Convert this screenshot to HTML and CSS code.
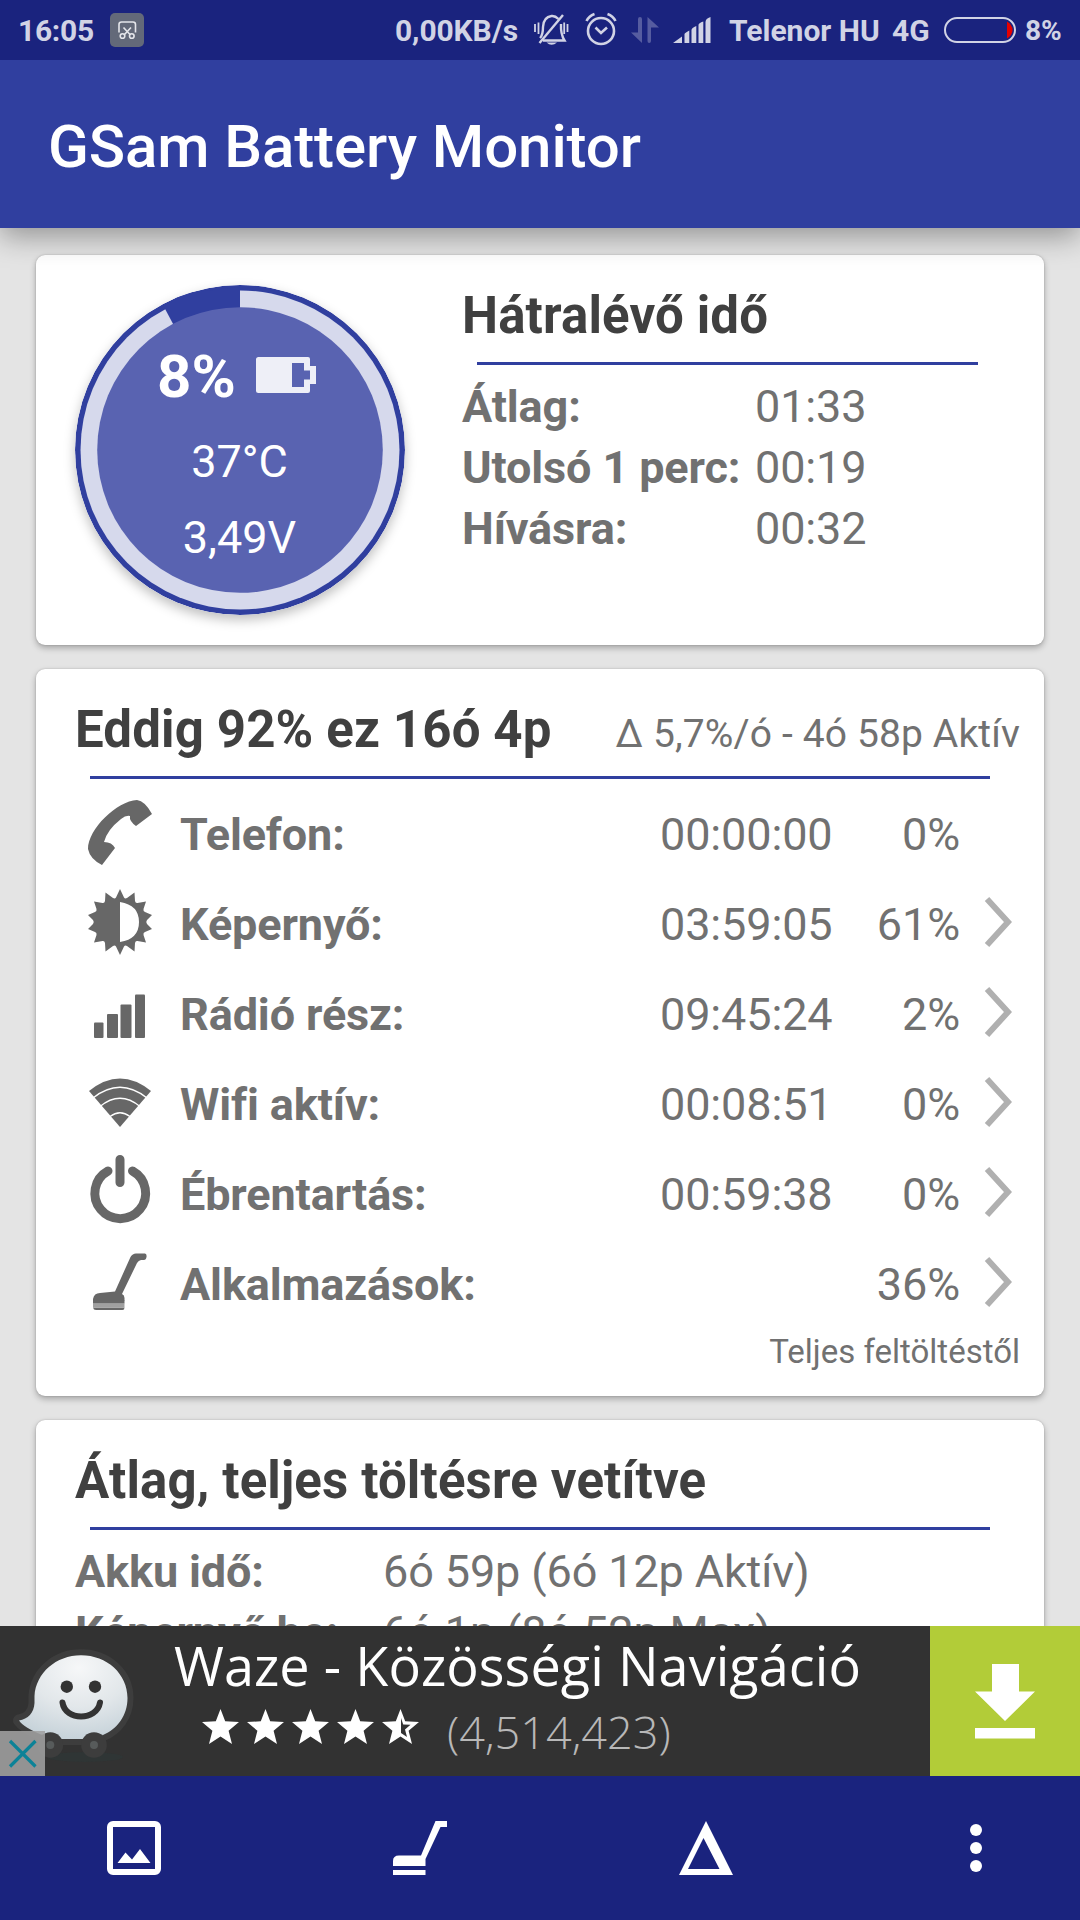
FILE: index.html
```html
<!DOCTYPE html>
<html lang="hu">
<head>
    <meta charset="UTF-8">
    <title>GSam Battery Monitor</title>
    <link rel="stylesheet" href="styles.css">
</head>
<body>
    <div class="status">
        <span class="clock">16:05</span>
        <svg class="shot" width="34" height="34" viewBox="0 0 34 34">
            <rect width="34" height="34" rx="5" fill="#636979"/>
            <g fill="none" stroke="#e4e5ea" stroke-width="1.6">
                <path d="M9 19.500V11.500Q9 9 11.500 9H23Q25.500 9 25.500 11.500V19.500M13.500 14.500L20 21.500M21 14.500L14.500 21.500"/>
                <circle cx="12.500" cy="23" r="2.300"/>
                <circle cx="21.800" cy="23" r="2.300"/>
            </g>
        </svg>
        <span class="speed">0,00KB/s</span>
        <svg class="bell" width="36" height="34" viewBox="0 0 36 34">
            <g fill="none" stroke="#d1d3e5" stroke-width="2.400">
                <path d="M7 25Q10 22 10 14Q10.500 4 18.500 3Q22 2.500 25.500 6M28 11Q27.500 21 31.500 27.500H10"/>
                <path d="M6.500 30L30 2"/>
                <path d="M2 11V19M5.500 9.500V21M34.500 11V19M31.200 9.500V21" stroke-width="1.800"/>
            </g>
            <path d="M13.500 29.500H24Q18.500 34 13.500 29.500Z" fill="#d1d3e5"/>
        </svg>
        <svg class="alarm" width="32" height="34" viewBox="0 0 32 34">
            <g fill="none" stroke="#d1d3e5" stroke-width="2.600">
                <circle cx="16" cy="19" r="13"/>
                <path d="M10.500 15.500L16 21L22 15.500"/>
                <path d="M1.500 9Q4 4 9.500 2M30.500 9Q28 4 22.500 2"/>
            </g>
        </svg>
        <svg class="arrows" width="28" height="26" viewBox="0 0 28 26">
            <path d="M7 2Q7 0 9 0Q11 0 11 2V26L0 15.500H7ZM16.500 0L28 10.500H20V24Q20 26 18.200 26Q16.500 26 16.500 24Z" fill="#565ca0"/>
        </svg>
        <svg class="bars" width="38" height="26" viewBox="0 0 38 26">
            <path d="M0 26L9 19.500V26ZM11.500 26V17Q11.500 16 16.300 13.500V26ZM18.500 26V13Q18.500 11 23.300 9V26ZM25.500 26V8Q25.500 6 30.300 4.500V26ZM32.500 26V5Q32.500 1.500 37.500 0V26Z" fill="#d1d3e5"/>
        </svg>
        <span class="carrier">Telenor HU</span>
        <span class="net">4G</span>
        <svg class="cell" width="72" height="26" viewBox="0 0 72 26">
            <rect x="1" y="1" width="70" height="24" rx="12" fill="none" stroke="#d1d3e5" stroke-width="2"/>
            <path d="M63 4.500Q68.500 8 68.500 13Q68.500 18 63 21.500Z" fill="#e60000"/>
        </svg>
        <span class="pct">8%</span>
    </div>
    <div class="header">
        <h1>GSam Battery Monitor</h1>
    </div>

    <div class="content">
        <div class="card summary">
            <div class="gauge">
                <!-- gyűrű: 8% töltöttség -->
                <svg class="ring" width="330" height="330" viewBox="0 0 330 330">
                    <circle cx="165" cy="165" r="165" fill="#303f9f"/>
                    <circle cx="165" cy="165" r="159.500" fill="#d6d9ec"/>
                    <path d="M165 165L88 20L110 8L165 2Z" fill="#303f9f"/>
                    <circle cx="165" cy="165" r="142.800" fill="#5963b1"/>
                </svg>
                <div class="level">
                    <span>8%</span>
                    <svg width="60" height="36" viewBox="0 0 60 36">
                        <path fill-rule="evenodd" d="M2.500 0H52Q54 0 54 2V9H60V27H54V34Q54 36 52 36H2.500Q0 36 0 33.500V2.500Q0 0 2.500 0ZM36 6V30H48V22.500H54V13.500H48V6Z" fill="#eeeff7"/>
                    </svg>
                </div>
                <div class="temp">37°C</div>
                <div class="volt">3,49V</div>
            </div>
            <div class="remain">
                <h2>Hátralévő idő</h2>
                <div class="line"></div>
                <ul class="pairs">
                    <li><b>Átlag:</b><span>01:33</span></li>
                    <li><b>Utolsó 1 perc:</b><span>00:19</span></li>
                    <li><b>Hívásra:</b><span>00:32</span></li>
                </ul>
            </div>
        </div>

        <div class="card usage">
            <div class="title">
                <h2>Eddig 92% ez 16ó 4p</h2>
                <span>Δ 5,7%/ó - 4ó 58p Aktív</span>
            </div>
            <div class="line"></div>
            <ul class="rows">
                <li>
                    <svg class="icon" viewBox="0 0 66 66">
                        <path d="M50 1Q58 2 65 15L49 27Q42 22 43 17Q39 16 34 20Q20 31 17 43Q25 43 28 49L15 66Q3 60 1 50C1 30 30 2 50 1Z"/>
                    </svg>
                    <b>Telefon:</b><span class="time">00:00:00</span><span class="num">0%</span>
                </li>
                <li>
                    <svg class="icon" viewBox="0 0 66 66">
                        <path fill-rule="evenodd" d="M33 0L37 8.500Q38 10 40 9L47.500 3.500L48 12Q48.500 14.500 50.500 14L59 12.500L56.500 20Q56 22.500 58 23L65 26L60 31Q58.500 33 60 35L65 40L58 43Q56 43.500 56.500 46L59 53.500L50.500 52Q48.500 51.500 48 54L47.500 62.500L40 57Q38 56 37 57.500L33 66L29 57.500Q28 56 26 57L18.500 62.500L18 54Q17.500 51.500 15.500 52L7 53.500L9.500 46Q10 43.500 8 43L1 40L6 35Q7.500 33 6 31L1 26L8 23Q10 22.500 9.500 20L7 12.500L15.500 14Q17.500 14.500 18 12L18.500 3.500L26 9Q28 10 29 8.500ZM33 13V53Q52 50 52 33Q52 16 33 13Z"/>
                    </svg>
                    <b>Képernyő:</b><span class="time">03:59:05</span><span class="num">61%</span>
                    <svg class="go" viewBox="0 0 28 52"><path d="M3 3L24 26L3 49"/></svg>
                </li>
                <li>
                    <svg class="icon" viewBox="0 0 66 66">
                        <rect x="7" y="43.500" width="9.500" height="15.500" rx="1"/>
                        <rect x="20" y="35" width="11" height="24" rx="1"/>
                        <rect x="33.500" y="25.500" width="11" height="33.500" rx="1"/>
                        <rect x="48" y="15.500" width="10" height="43.500" rx="1"/>
                    </svg>
                    <b>Rádió rész:</b><span class="time">09:45:24</span><span class="num">2%</span>
                    <svg class="go" viewBox="0 0 28 52"><path d="M3 3L24 26L3 49"/></svg>
                </li>
                <li>
                    <svg class="icon" viewBox="0 0 66 66">
                        <path d="M33 58L2 22Q33 -3 64 22Z"/>
                        <path d="M6 29Q33 7.500 60 29M13 37.500Q33 21 53 37.500M23 47.500Q33 40 43 47.500" fill="none" stroke="#fff" stroke-width="1.300"/>
                    </svg>
                    <b>Wifi aktív:</b><span class="time">00:08:51</span><span class="num">0%</span>
                    <svg class="go" viewBox="0 0 28 52"><path d="M3 3L24 26L3 49"/></svg>
                </li>
                <li>
                    <svg class="icon" viewBox="0 0 66 66">
                        <path d="M33 0.500V23.500M21 12A25.400 25.400 0 1 0 45.500 12" fill="none" stroke="#676767" stroke-width="9" stroke-linecap="round"/>
                    </svg>
                    <b>Ébrentartás:</b><span class="time">00:59:38</span><span class="num">0%</span>
                    <svg class="go" viewBox="0 0 28 52"><path d="M3 3L24 26L3 49"/></svg>
                </li>
                <li>
                    <svg class="icon" viewBox="0 0 66 66">
                        <path d="M6 52V50Q7 44 13 44L28 42.500L43.500 8Q45.500 4.500 49 4.500H58Q60 5 59.500 8Q59 11 57 11H54Q51.500 11.500 50 14L35 45Q37.500 46 37.500 49V52ZM6 58.500H37.500Q37.500 61 35.500 61H9Q6.500 61 6 58.500Z"/>
                        <path d="M6 54.500H37.500V58.500H6Z" fill="#a0a0a0"/>
                        <path d="M6 53H37.500" stroke="#676767" stroke-width="3"/>
                    </svg>
                    <b>Alkalmazások:</b><span class="time"></span><span class="num">36%</span>
                    <svg class="go" viewBox="0 0 28 52"><path d="M3 3L24 26L3 49"/></svg>
                </li>
            </ul>
            <div class="since">Teljes feltöltéstől</div>
        </div>

        <div class="card average">
            <h2>Átlag, teljes töltésre vetítve</h2>
            <div class="line"></div>
            <ul class="pairs">
                <li><b>Akku idő:</b><span>6ó 59p (6ó 12p Aktív)</span></li>
                <li><b>Képernyő be:</b><span>6ó 1p (8ó 52p Max)</span></li>
            </ul>
        </div>
    </div>

    <div class="ad">
        <svg class="waze" width="150" height="150" viewBox="0 0 150 150">
            <defs>
                <radialGradient id="ghost" cx="0.550" cy="0.150" r="0.850">
                    <stop offset="0" stop-color="#f6f7f8"/>
                    <stop offset="0.550" stop-color="#e2e7ea"/>
                    <stop offset="1" stop-color="#c7d3da"/>
                </radialGradient>
            </defs>
            <ellipse cx="85" cy="131" rx="38" ry="5" fill="#2f3535"/>
            <path d="M81 29.300C107 29.300 127.500 48 127.500 72C127.500 90 117 103 103 109L94 113H60L41 108.500C30 104 22 99 19 94.500C28 93 34 87 34.500 77V70C36 47 56 29.300 81 29.300Z" fill="url(#ghost)" stroke="#3d3d3d" stroke-width="12" stroke-linejoin="round" paint-order="stroke"/>
            <circle cx="50.300" cy="119" r="12.800" fill="#3d3d3d"/>
            <circle cx="94" cy="119" r="12.800" fill="#3d3d3d"/>
            <circle cx="50.300" cy="119" r="4" fill="#575b5b"/>
            <circle cx="94" cy="119" r="4" fill="#575b5b"/>
            <circle cx="66.800" cy="60.700" r="6.200" fill="#333"/>
            <circle cx="95" cy="60.700" r="6.200" fill="#333"/>
            <path d="M62.500 76.500C65 95 97 95 100 76.500" fill="none" stroke="#333" stroke-width="6" stroke-linecap="round"/>
        </svg>
        <div class="close">
            <svg width="45" height="45" viewBox="0 0 45 45">
                <path d="M10 10L35.500 35.500M35.500 10L10 35.500" stroke="#0c8297" stroke-width="3.200"/>
            </svg>
        </div>
        <div class="ad-text">
            <div class="name">Waze - Közösségi Navigáció</div>
            <div class="rating">
                <svg width="217" height="36" viewBox="0 0 217 36">
                    <g fill="#fff">
                        <path id="star" d="M18.500 0L23.200 12.300L37 13L26.600 21.800L30 35L18.500 27.600L7 35L10.400 21.800L0 13L13.800 12.300Z"/>
                        <use href="#star" x="45"/>
                        <use href="#star" x="90"/>
                        <use href="#star" x="135"/>
                        <use href="#star" x="180"/>
                        <path d="M199 9L201.200 15.500L208.500 15.800L203 20.500L205 28L199 24Z" fill="#323232"/>
                    </g>
                </svg>
                <span>(4,514,423)</span>
            </div>
        </div>
        <div class="download">
            <svg width="60" height="75" viewBox="0 0 60 75">
                <path d="M17 0H44V27.500H60L30 57L0 27.500H17ZM0 64H60V74.500H0Z" fill="#fff"/>
            </svg>
        </div>
    </div>

    <div class="nav">
        <svg width="54" height="54" viewBox="0 0 54 54">
            <rect x="3" y="3" width="48" height="48" rx="3" fill="none" stroke="#fff" stroke-width="6"/>
            <path d="M10.500 42L18.500 31.500L25 38.500L33 28L43.500 42Z" fill="#fff"/>
        </svg>
        <svg width="54" height="54" viewBox="0 0 54 54">
            <path d="M0 45V40Q0 34.500 6 34.500H28L42.500 0H54V6H47.500L32.500 38V45ZM0 49H32.500V54H0Z" fill="#fff"/>
        </svg>
        <svg width="54" height="54" viewBox="0 0 54 54">
            <path fill-rule="evenodd" d="M27 0L54 54H0ZM24.500 17L9 48H40.500Z" fill="#fff"/>
        </svg>
        <svg class="more" width="12" height="48" viewBox="0 0 12 48">
            <circle cx="6" cy="6" r="6" fill="#fff"/>
            <circle cx="6" cy="24" r="6" fill="#fff"/>
            <circle cx="6" cy="42" r="6" fill="#fff"/>
        </svg>
    </div>
</body>
</html>
```
FILE: styles.css
```css
*{
    margin:0;
    padding:0;
    box-sizing: border-box;
}
body{
    width:1080px;
    height:1920px;
    overflow: hidden;
    background: #e4e4e4;
    font-family: Roboto, "Noto Sans", sans-serif;
    color:#717171;
    display:flex;
    flex-direction: column;
}
ul{
    list-style: none;
}
svg{
    display:block;
    flex:none;
}

/*状态栏*/
.status{
    height:60px;
    flex:none;
    background: #1a237e;
    color:#d1d3e5;
    font-size: 30px;
    font-weight: 700;
    line-height: 62px;
    display:flex;
    align-items: center;
    white-space: nowrap;
    position:relative;
    z-index: 2;
}
.status span{
    flex:none;
    padding-top:1px;
}
.status .clock{
    width:91px;
    margin-left:18px;
    letter-spacing: -.3px;
}
.status .shot{
    margin-left:1px;
}
.status .speed{
    width:138px;
    margin-left:251px;
    letter-spacing: -.1px;
}
.status .alarm{
    margin-left:16px;
    margin-top:-3px;
}
.status .arrows{
    margin-left:14px;
}
.status .bars{
    margin-left:14px;
}
.status .carrier{
    width:163px;
    margin-left:18px;
}
.status .net{
    width:52px;
}
.status .pct{
    margin-left:9px;
    font-size: 28px;
}

.header{
    height:168px;
    flex:none;
    background: #303f9f;
    padding:6px 0 0 48px;
    box-shadow: 0 8px 28px rgba(0,0,0,.36);
    position:relative;
    z-index: 1;
}
.header h1{
    color:white;
    font-size: 60px;
    font-weight: 500;
    line-height: 162px;
    letter-spacing: -.1px;
}

.content{
    height:1398px;
    flex:none;
    overflow: hidden;
    padding:27px 36px 0;
    display:flex;
    flex-direction: column;
    gap:24px;
}
.card{
    flex:none;
    background: white;
    border-radius: 9px;
    box-shadow: 0 3px 6px rgba(0,0,0,.28), 0 0 2px rgba(0,0,0,.2);
    padding:30px 25px 0 39px;
}
.card h2{
    color:#404040;
    font-size: 51px;
    font-weight: 700;
    line-height: 61px;
    height:61px;
    letter-spacing: .14px;
    white-space: nowrap;
}
.line{
    height:3px;
    background: #303f9f;
    margin:16px 29px 0 15px;
}
.pairs{
    margin-top:11px;
    font-size: 45px;
    line-height: 61px;
    letter-spacing: -.13px;
    white-space: nowrap;
}
.pairs li{
    display:flex;
}

/*电量*/
.summary{
    height:390px;
    display:flex;
}
.gauge{
    width:330px;
    height:330px;
    flex:none;
    position:relative;
    color:white;
    font-size: 45px;
    text-align: center;
    padding:56px 1px 0 0;
}
.gauge .ring{
    position:absolute;
    left:0;
    top:0;
    border-radius: 50%;
    box-shadow: 0 5px 12px rgba(0,0,0,.25);
}
.gauge div{
    position:relative;
}
.gauge .level{
    height:72px;
    display:flex;
    align-items: center;
    padding-left:82px;
    font-size: 60px;
    font-weight: 700;
}
.gauge .level span{
    line-height: 70px;
}
.gauge .level svg{
    margin-left:auto;
    margin-right:88px;
    margin-top:-4px;
}
.gauge .temp{
    margin-top:11px;
    line-height: 76px;
}
.gauge .volt{
    line-height: 76px;
}
.remain{
    width:574px;
    flex:none;
    margin-left:57px;
}
.remain .line{
    margin-right:58px;
}
.remain .pairs b{
    width:293px;
}

/*耗电列表*/
.usage{
    height:727px;
}
.usage .title{
    display:flex;
    justify-content: space-between;
}
.usage .title span{
    font-size: 39px;
    line-height: 71px;
    height:61px;
    letter-spacing: .13px;
    margin-right:-1px;
    white-space: nowrap;
}
.rows{
    margin-top:8px;
}
.rows li{
    height:90px;
    display:flex;
    align-items: center;
    font-size: 45px;
    letter-spacing: -.13px;
}
.rows .icon{
    width:66px;
    height:66px;
    margin:0 27px 0 12px;
    fill:#676767;
    overflow: visible;
}
.rows b{
    width:480px;
    padding-top:5px;
}
.rows .time{
    width:173px;
    padding-top:5px;
}
.rows .num{
    width:127px;
    text-align: right;
    padding-top:5px;
}
.rows .go{
    width:28px;
    height:52px;
    margin-left:24px;
    fill:none;
    stroke:#b0b0b0;
    stroke-width:6px;
}
.since{
    font-size: 33px;
    line-height: 40px;
    margin:5px -1px 0 0;
    text-align: right;
}

.average{
    height:500px;
}
.average .pairs b{
    width:308px;
}

/*广告*/
.ad{
    height:150px;
    flex:none;
    background: #323232;
    display:flex;
    position:relative;
    font-family: "Open Sans", "Noto Sans", sans-serif;
    color:white;
}
.ad .close{
    width:45px;
    height:45px;
    position:absolute;
    left:0;
    bottom:0;
    background: rgba(160,160,160,.88);
}
.ad-text{
    width:780px;
    padding-left:24px;
    white-space: nowrap;
}
.ad-text .name{
    font-size: 54px;
    line-height: 76px;
    padding-top:1px;
    letter-spacing: .05px;
}
.ad-text .rating{
    display:flex;
    align-items: flex-start;
    padding:6px 0 0 28px;
}
.ad-text .rating span{
    font-size: 45px;
    font-weight: 300;
    line-height: 50px;
    color:#b8b8b8;
    margin:-2px 0 0 28px;
}
.download{
    width:150px;
    background: #b2cc38;
    padding:38px 0 0 45px;
}

/*底部菜单*/
.nav{
    height:144px;
    flex:none;
    background: #1a237e;
    display:flex;
    align-items: center;
    gap:232px;
    padding-left:107px;
}
.nav .more{
    margin-left:5px;
}
```
